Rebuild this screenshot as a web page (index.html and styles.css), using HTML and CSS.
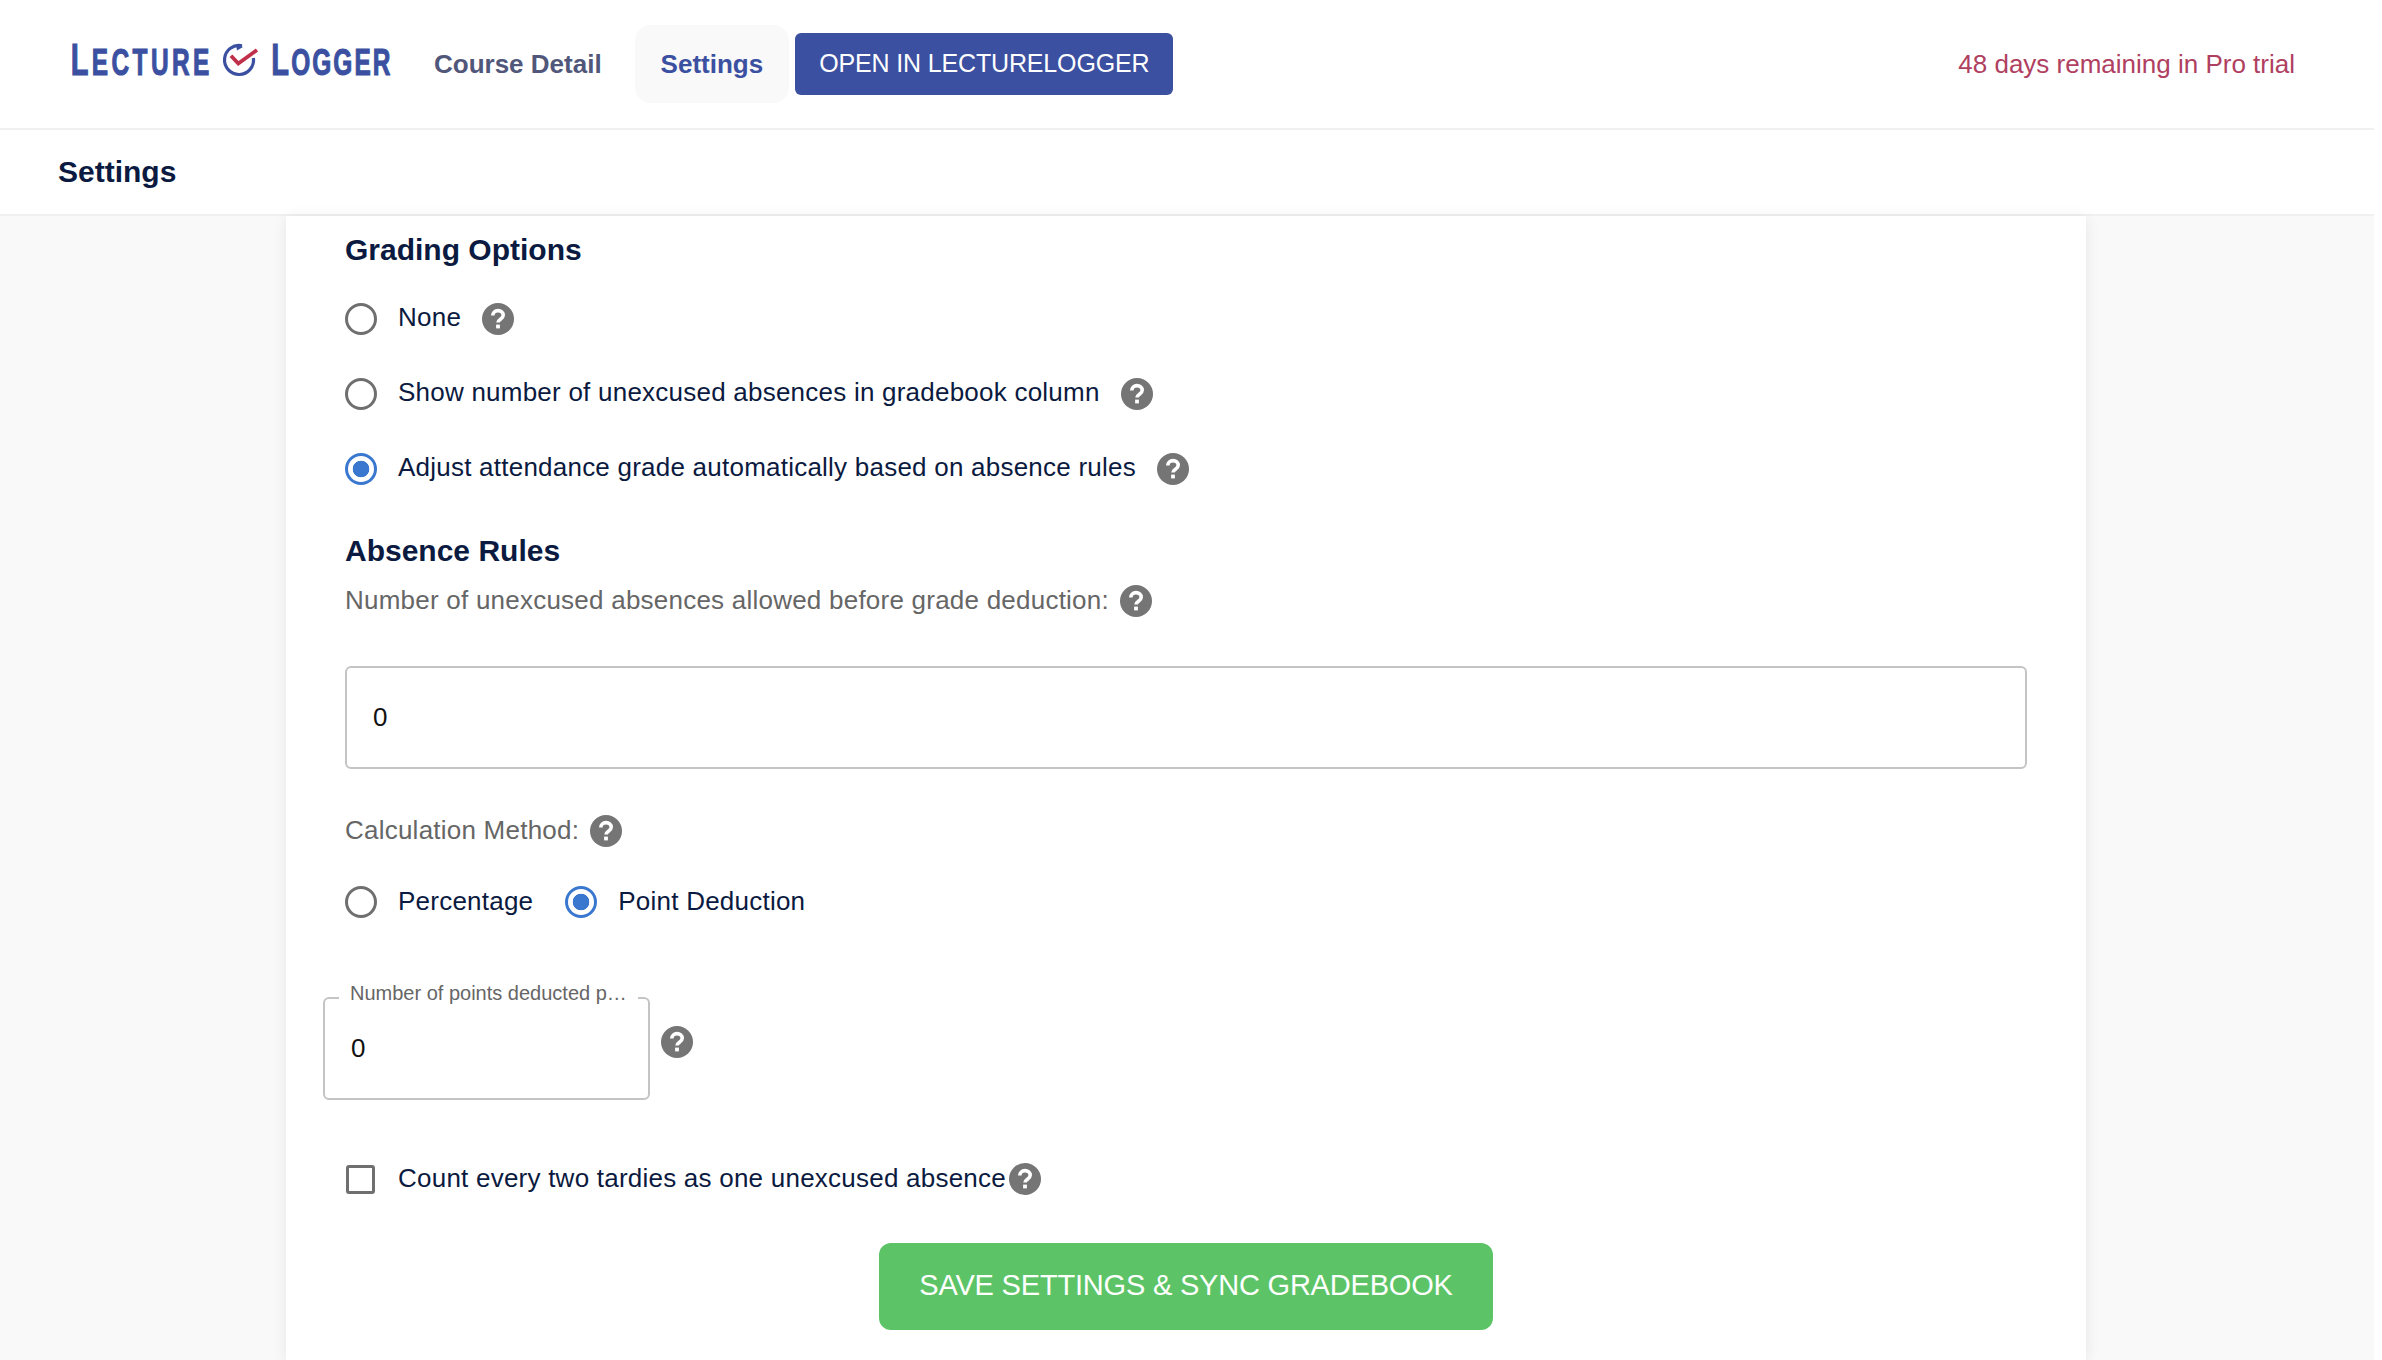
FILE: index.html
```html
<!DOCTYPE html>
<html lang="en">
<head>
<meta charset="utf-8">
<title>Settings</title>
<link rel="stylesheet" href="styles.css">
</head>
<body>
<div class="page">
  <header class="topbar">
    <svg class="logo" width="322" height="40" viewBox="0 0 322 40" role="img" aria-label="Lecture Logger">
      <g transform="scale(.66 1)">
        <text class="logo-text wide" x="1" y="31"><tspan class="logo-cap">L</tspan>ECTURE</text>
        <text class="logo-text tight" x="305" y="31"><tspan class="logo-cap">L</tspan>OGGER</text>
      </g>
      <path d="M183.4 14A14.5 14.5 0 1 1 172 1.8" fill="none" stroke="#3b50a0" stroke-width="3.2"/>
      <path d="M166 0l7 3-6 3.5z" fill="#3b50a0"/>
      <path d="M161 11.7l7.3 7.8L187 6" fill="none" stroke="#c0304a" stroke-width="3.8"/>
    </svg>
    <nav class="nav">
      <a class="nav-link">Course Detail</a>
      <a class="nav-link active">Settings</a>
      <a class="open-btn">OPEN IN LECTURELOGGER</a>
    </nav>
    <div class="trial">48 days remaining in Pro trial</div>
  </header>
  <div class="subbar">Settings</div>
  <main class="main">
    <section class="card">
      <h2 class="heading first">Grading Options</h2>
      <div class="option-row">
        <span class="radio"></span><span class="label">None</span>
        <span class="help gap"><svg viewBox="0 0 32 32"><use href="#q"/></svg></span>
      </div>
      <div class="option-row">
        <span class="radio"></span><span class="label">Show number of unexcused absences in gradebook column</span>
        <span class="help gap"><svg viewBox="0 0 32 32"><use href="#q"/></svg></span>
      </div>
      <div class="option-row">
        <span class="radio on"></span><span class="label">Adjust attendance grade automatically based on absence rules</span>
        <span class="help gap"><svg viewBox="0 0 32 32"><use href="#q"/></svg></span>
      </div>
      <h2 class="heading second">Absence Rules</h2>
      <div class="muted-row">
        <span class="muted">Number of unexcused absences allowed before grade deduction:</span>
        <span class="help small-gap"><svg viewBox="0 0 32 32"><use href="#q"/></svg></span>
      </div>
      <div class="input-box">0</div>
      <div class="muted-row calc">
        <span class="muted">Calculation Method:</span>
        <span class="help small-gap"><svg viewBox="0 0 32 32"><use href="#q"/></svg></span>
      </div>
      <div class="method-row">
        <span class="radio"></span><span class="label">Percentage</span>
        <span class="radio on second-radio"></span><span class="label">Point Deduction</span>
      </div>
      <div class="field-row">
        <div class="field">
          <span class="field-label">Number of points deducted p…</span>
          0
        </div>
        <span class="help field-help"><svg viewBox="0 0 32 32"><use href="#q"/></svg></span>
      </div>
      <div class="check-row">
        <span class="checkbox"></span><span class="label">Count every two tardies as one unexcused absence</span>
        <span class="help check-help"><svg viewBox="0 0 32 32"><use href="#q"/></svg></span>
      </div>
      <div class="save-wrap"><a class="save-btn">SAVE SETTINGS &amp; SYNC GRADEBOOK</a></div>
    </section>
  </main>
</div>
<svg class="defs" width="0" height="0" aria-hidden="true">
  <symbol id="q" viewBox="0 0 32 32">
    <circle cx="16" cy="16" r="16" fill="#757575"/>
    <path d="M10.8 12.6c0-3 2.3-5 5.2-5s5.2 1.9 5.2 4.6c0 3.9-5.2 4-5.2 7.4" fill="none" stroke="#fff" stroke-width="3.6"/>
    <rect x="14.1" y="21.6" width="3.8" height="3.8" fill="#fff"/>
  </symbol>
</svg>
</body>
</html>
```
FILE: styles.css
```css
* { box-sizing: border-box; }
html, body { margin: 0; height: 100%; background: #fff; }
body { font-family: "Liberation Sans", Arial, sans-serif; color: #0b1a40; overflow: hidden; }
.defs { position: absolute; }
.page { width: 2374px; height: 1360px; display: flex; flex-direction: column; overflow: hidden; }
.topbar { height: 130px; flex: none; display: flex; align-items: center; padding-left: 70px; padding-right: 79px; border-bottom: 2px solid #f0f0f0; background: #fff; }
.logo { flex: none; overflow: visible; margin-right: 42px; }
.logo-text { font-family: "Liberation Sans", sans-serif; font-weight: 700; font-size: 37px; fill: #3b50a0; stroke: #3b50a0; stroke-width: 1.1px; }
.logo-text.wide { letter-spacing: 5.2px; }
.logo-text.tight { letter-spacing: 3.2px; }
.logo-cap { font-size: 44px; }
.nav { display: flex; align-items: center; flex: 1; }
.nav-link { font-size: 26px; font-weight: 700; color: #50577a; padding: 0 33px 0 0; }
.nav-link.active { color: #3b50a0; background: #f9f9f9; border-radius: 16px; height: 78px; line-height: 78px; padding: 0 26px; margin-right: 6px; }
.open-btn { height: 62px; line-height: 60px; padding: 0 24px; background: #3b50a0; color: #fff; font-size: 25px; letter-spacing: -.15px; border-radius: 6px; }
.trial { font-size: 26px; color: #b0405f; }
.subbar { height: 86px; flex: none; display: flex; align-items: center; padding-left: 58px; font-size: 30px; font-weight: 700; border-bottom: 2px solid #f0f0f0; background: #fff; }
.main { flex: 1; background: #f9f9f9; padding: 0 288px 0 286px; min-height: 0; }
.card { height: 100%; background: #fff; padding: 0 59px; box-shadow: 0 2px 14px rgba(0,0,0,.08); }
.heading { margin: 0; font-size: 30px; font-weight: 700; line-height: 36px; }
.heading.first { padding-top: 16px; }
.heading.second { margin-top: 27px; }
.option-row { height: 75px; display: flex; align-items: center; }
.heading.first + .option-row { margin-top: 13px; }
.label { font-size: 26px; line-height: 32px; margin-top: -3px; letter-spacing: .23px; }
.radio { width: 32px; height: 32px; border: 3px solid #6f6f6f; border-radius: 50%; margin-right: 21px; flex: none; }
.radio.on { border-color: #3a78d0; background: radial-gradient(circle, #3a78d0 0 8px, #fff 8.6px); }
.second-radio { margin-left: 32px; }
.help { width: 32px; height: 32px; flex: none; display: inline-flex; }
.help svg { width: 32px; height: 32px; }
.help.gap { margin-left: 21px; }
.help.small-gap { margin-left: 11px; }
.muted-row { display: flex; align-items: center; height: 36px; margin-top: 14px; }
.muted { font-size: 26px; color: #666; margin-top: -2px; letter-spacing: .23px; }
.input-box { height: 103px; margin-top: 47px; border: 2px solid #c4c4c4; border-radius: 6px; padding-left: 26px; display: flex; align-items: center; font-size: 26px; color: #111; }
.muted-row.calc { margin-top: 44px; }
.method-row { display: flex; align-items: center; height: 48px; margin-top: 29px; }
.field-row { display: flex; margin-top: 71px; margin-left: -22px; }
.field { position: relative; width: 327px; height: 103px; border: 2px solid #c4c4c4; border-radius: 6px; padding-left: 26px; display: flex; align-items: center; font-size: 26px; color: #111; }
.field-label { position: absolute; left: 14px; top: -18px; background: #fff; padding: 0 11px; font-size: 20px; line-height: 24px; color: #666; white-space: nowrap; }
.field-help { margin: 29px 0 0 11px; }
.check-row { display: flex; align-items: center; height: 36px; margin-top: 61px; }
.check-help { margin-left: 3px; }
.checkbox { width: 29px; height: 29px; margin: 0 23px 0 1px; border: 3px solid #6f6f6f; border-radius: 3px; flex: none; }
.save-wrap { display: flex; justify-content: center; margin-top: 46px; }
.save-btn { height: 87px; line-height: 85px; width: 614px; text-align: center; background: #5cc467; color: #fff; font-size: 29px; letter-spacing: -.2px; border-radius: 12px; }
```
